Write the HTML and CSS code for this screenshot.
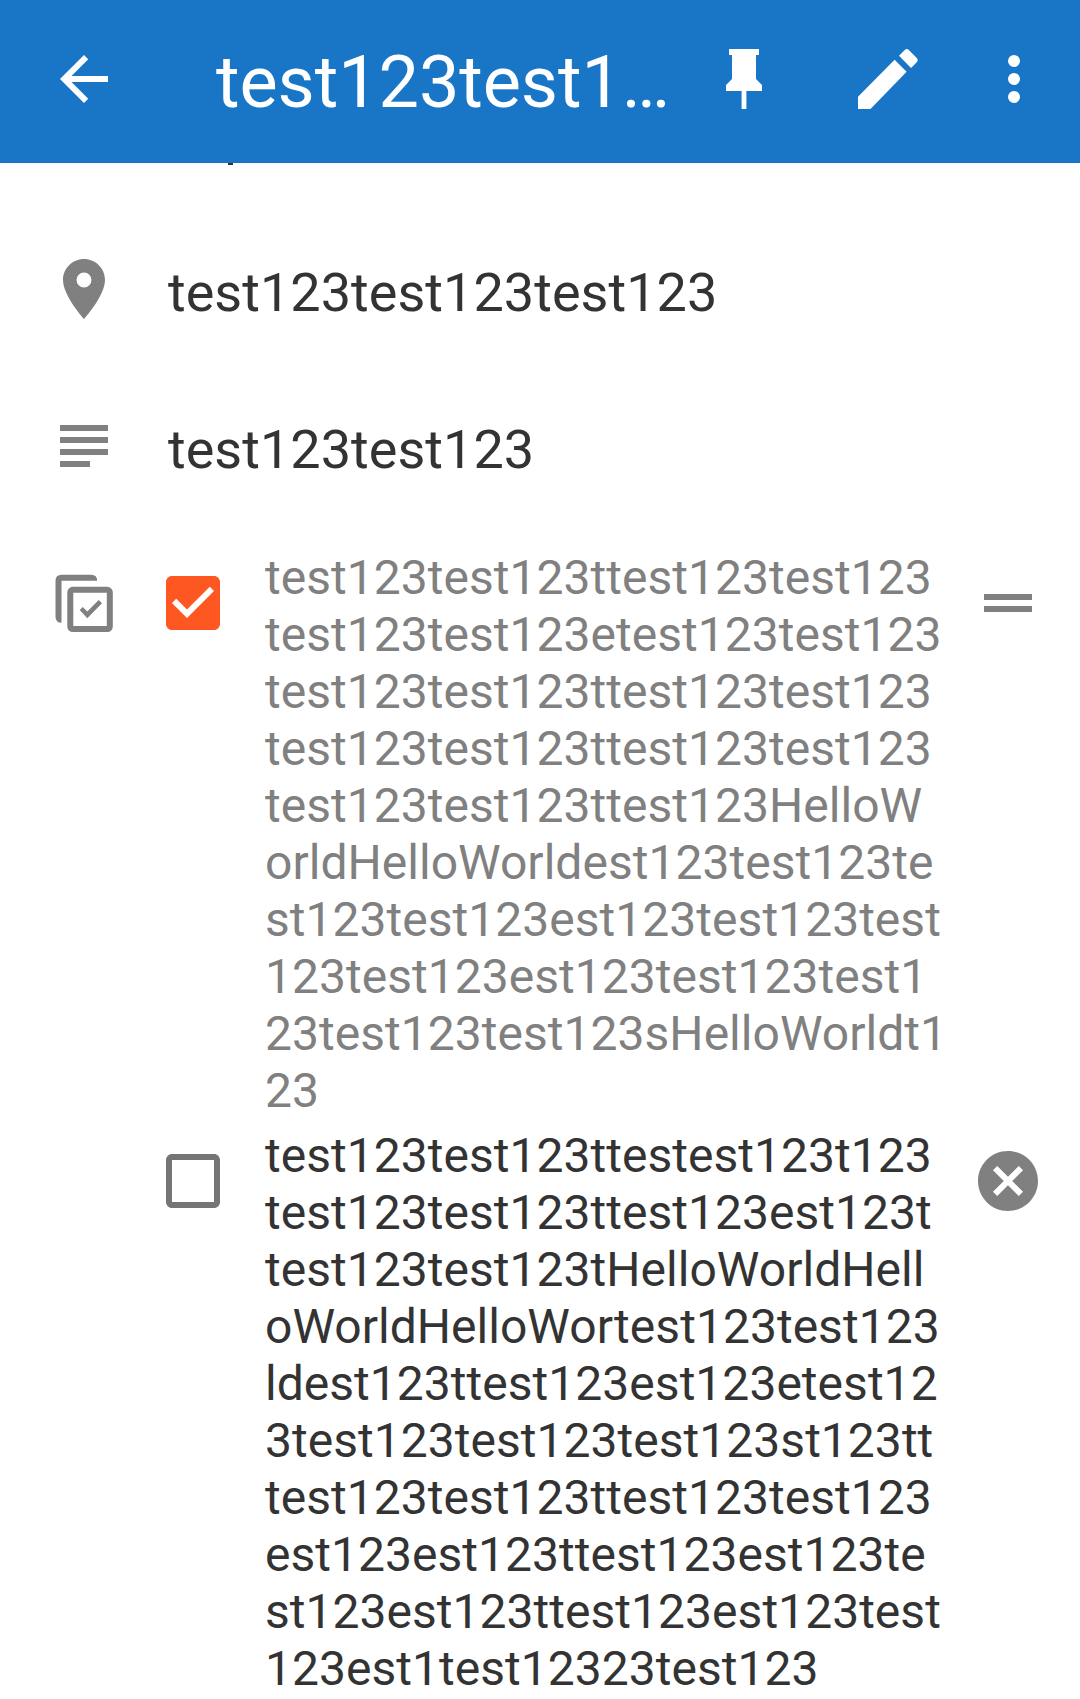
FILE: index.html
```html
<!DOCTYPE html>
<html lang="en">
<head>
<meta charset="utf-8">
<title>Details</title>
<link rel="stylesheet" href="styles.css">
</head>
<body>
<header class="app-bar">
  <svg class="icon" viewBox="0 0 24 24"><path d="M20 11H7.83l5.59-5.59L12 4l-8 8 8 8 1.41-1.41L7.83 13H20v-2z"/></svg>
  <h1 class="title">test123test1…</h1>
  <svg class="icon pin" viewBox="0 0 24 24"><path d="M16 12V4h1V2H7v2h1v8l-2 2v2h5.2v6h1.6v-6H18v-2l-2-2z"/></svg>
  <svg class="icon edit" viewBox="0 0 72 72"><path d="M9 53.7V66h12.5l36.1-37.2-12-12L9 53.7zM50 12.7l6-6q1.8-1.4 3.6 0l8.4 8.6q1.6 1.9 0 3.7l-6 6z" transform="translate(-3 0)"/></svg>
  <svg class="icon more" viewBox="0 0 24 24"><circle cx="12" cy="6" r="2"/><circle cx="12" cy="12" r="2"/><circle cx="12" cy="18" r="2"/></svg>
</header>
<main class="content">
  <div class="scrolled-edge"></div>
  <section class="row">
    <svg class="icon" viewBox="0 0 24 24"><path d="M12 2C8.13 2 5 5.13 5 9c0 5.25 7 13 7 13s7-7.75 7-13c0-3.87-3.13-7-7-7zm0 9.5a2.5 2.5 0 0 1 0-5 2.5 2.5 0 0 1 0 5z"/></svg>
    <p class="value">test123test123test123</p>
  </section>
  <section class="row">
    <svg class="icon" viewBox="0 0 24 24"><path d="M4 5h16v2H4zM4 9h16v2H4zM4 13h16v2H4zM4 17h10v2H4z"/></svg>
    <p class="value">test123test123</p>
  </section>
  <section class="checklist">
    <svg class="icon list-icon" viewBox="0 0 72 72"><path d="M49.2 13.8H13.5v42q-6 0-6-6V13.8q0-6 6-6h29.7q6 0 6 6z"/><rect class="stroke" x="22.3" y="22.8" width="39.5" height="39.2" rx="2.5"/><path d="M31.7 43l3-3 4.6 4.6L50.7 33l3.3 3.3-14.7 15z"/></svg>
    <ul class="items">
      <li class="item done">
        <svg class="icon checked" viewBox="0 0 24 24"><path d="M19 3H5c-1.11 0-2 .9-2 2v14c0 1.1.89 2 2 2h14c1.11 0 2-.9 2-2V5c0-1.1-.9-2-2-2zm-9 14l-5-5 1.41-1.41L10 14.17l7.59-7.59L19 8l-9 9z"/></svg>
        <p class="label">test123test123ttest123test123<br>test123test123etest123test123<br>test123test123ttest123test123<br>test123test123ttest123test123<br>test123test123ttest123HelloW<br>orldHelloWorldest123test123te<br>st123test123est123test123test<br>123test123est123test123test1<br>23test123test123sHelloWorldt1<br>23</p>
        <svg class="icon" viewBox="0 0 24 24"><path d="M4 9h16v2H4zM4 13h16v2H4z"/></svg>
      </li>
      <li class="item">
        <svg class="icon unchecked" viewBox="0 0 24 24"><path d="M19 5v14H5V5h14m0-2H5c-1.1 0-2 .9-2 2v14c0 1.1.9 2 2 2h14c1.1 0 2-.9 2-2V5c0-1.1-.9-2-2-2z"/></svg>
        <p class="label">test123test123ttestest123t123<br>test123test123ttest123est123t<br>test123test123tHelloWorldHell<br>oWorldHelloWortest123test123<br>ldest123ttest123est123etest12<br>3test123test123test123st123tt<br>test123test123ttest123test123<br>est123est123ttest123est123te<br>st123est123ttest123est123test<br>123est1test12323test123</p>
        <svg class="icon" viewBox="0 0 24 24"><path d="M12 2C6.47 2 2 6.47 2 12s4.47 10 10 10 10-4.47 10-10S17.53 2 12 2zm5 13.59L15.59 17 12 13.41 8.41 17 7 15.59 10.59 12 7 8.41 8.41 7 12 10.59 15.59 7 17 8.41 13.41 12 17 15.59z"/></svg>
      </li>
    </ul>
  </section>
</main>
</body>
</html>
```
FILE: styles.css
```css
* {
  box-sizing: border-box;
  margin: 0;
  padding: 0;
}

body {
  height: 1699px;
  overflow: hidden;
  background: #fff;
  color: #333;
  font-family: Roboto, "Liberation Sans", sans-serif;
}

.icon {
  flex: none;
  display: block;
  width: 72px;
  height: 72px;
  fill: #808080;
}

.app-bar {
  display: flex;
  align-items: flex-start;
  height: 163px;
  padding: 43px 30px 0 48px;
  background: #1976c7;
}

.app-bar .icon {
  fill: #fff;
}

.title {
  width: 492px;
  margin-left: 96px;
  color: #fff;
  font-size: 72px;
  font-weight: 400;
  line-height: 80px;
  letter-spacing: -0.08px;
  white-space: nowrap;
}

.edit {
  margin-left: 72px;
}

.more {
  margin-left: 54px;
}

/* Lower edge of the line that has scrolled under the app bar */
.scrolled-edge {
  width: 5px;
  height: 2px;
  margin: 0 0 46px 228px;
  background: #333;
}

.row {
  display: flex;
  align-items: flex-start;
  gap: 48px;
  height: 157px;
  padding: 42px 0 0 48px;
}

.value {
  padding-top: 8px;
  font-size: 54px;
  line-height: 64px;
  letter-spacing: 0.03px;
}

.checklist {
  display: flex;
  gap: 37px;
  padding: 24px 0 0 48px;
}

.list-icon {
  margin-top: 17.5px;
}

.stroke {
  fill: none;
  stroke: #808080;
  stroke-width: 6;
}

.items {
  list-style: none;
}

.item {
  display: flex;
  height: 578px;
}

.item .icon {
  margin-top: 18px;
}

.label {
  width: 707px;
  margin-left: 36px;
  font-size: 48px;
  line-height: 57px;
  letter-spacing: 0.03px;
  white-space: nowrap;
}

.done .label {
  color: #808080;
}

.item .checked {
  fill: #ff5722;
}

.item .unchecked {
  fill: #757575;
}
```
